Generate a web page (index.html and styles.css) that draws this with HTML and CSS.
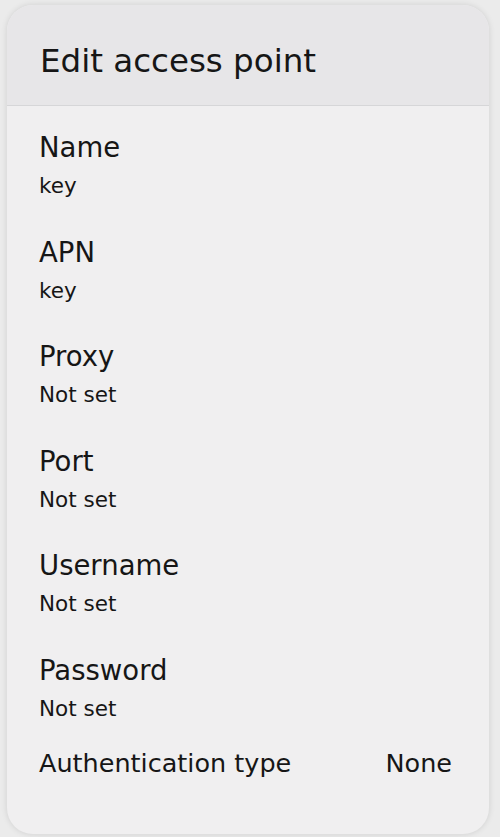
FILE: index.html
```html
<!DOCTYPE html>
<html>
<head>
<meta charset="utf-8">
<link rel="stylesheet" href="styles.css">
</head>
<body>
<div class="card">
  <div class="header"><h1 class="title">Edit access point</h1></div>
  <div class="list">
    <div class="item"><div class="label">Name</div><div class="value">key</div></div>
    <div class="item"><div class="label">APN</div><div class="value">key</div></div>
    <div class="item"><div class="label">Proxy</div><div class="value">Not set</div></div>
    <div class="item"><div class="label">Port</div><div class="value">Not set</div></div>
    <div class="item"><div class="label">Username</div><div class="value">Not set</div></div>
    <div class="item"><div class="label">Password</div><div class="value">Not set</div></div>
    <div class="row"><span class="row-label">Authentication type</span><span class="row-value">None</span></div>
  </div>
</div>
</body>
</html>
```
FILE: styles.css
```css
html, body {
  margin: 0;
  padding: 0;
}
body {
  background: #ebebeb;
  font-family: "DejaVu Sans", "Open Sans", sans-serif;
  color: #161616;
  padding: 5px 11px 3px 7px;
  height: 837px;
  box-sizing: border-box;
}
.card {
  height: 829px;
  background: #f0eff0;
  border-radius: 26px;
  overflow: hidden;
  box-shadow: 0 0 6px rgba(0,0,0,0.12);
  display: flex;
  flex-direction: column;
}
.header {
  background: #e7e6e8;
  border-bottom: 1px solid #d6d6d8;
  padding: 36px 33px 24px;
}
.title {
  margin: 0;
  font-size: 32.5px;
  line-height: 40px;
  font-weight: 400;
}
.list {
  padding: 25px 37px 0 32px;
  display: flex;
  flex-direction: column;
  gap: 36.5px;
}
.item {
  display: flex;
  flex-direction: column;
  gap: 10px;
}
.label {
  font-size: 27.5px;
  line-height: 32px;
}
.value {
  font-size: 21.5px;
  line-height: 26px;
}
.row {
  display: flex;
  justify-content: space-between;
  margin-top: -10px;
  font-size: 25.5px;
  line-height: 30px;
}
```
